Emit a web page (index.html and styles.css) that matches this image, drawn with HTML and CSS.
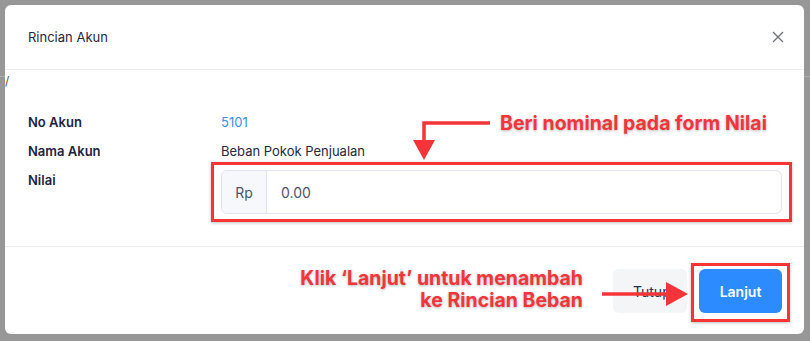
FILE: index.html
```html
<!DOCTYPE html>
<html lang="id">
<head>
<meta charset="utf-8">
<title>Rincian Akun</title>
<link rel="stylesheet" href="styles.css">
</head>
<body>
<div class="page-line"></div>
<div class="modal">
  <div class="modal-header">
    <span class="modal-title">Rincian Akun</span>
    <svg class="close" width="12" height="12" viewBox="0 0 12 12"><path d="M1 1L11 11M11 1L1 11" stroke="#6b6f78" stroke-width="1.3" fill="none"/></svg>
  </div>
  <div class="modal-body">
    <div class="label">No Akun</div>
    <div class="value link">5101</div>
    <div class="label">Nama Akun</div>
    <div class="value">Beban Pokok Penjualan</div>
    <div class="label nilai">Nilai</div>
    <div class="input-group">
      <span class="addon">Rp</span>
      <span class="input">0.00</span>
    </div>
  </div>
  <div class="modal-footer">
    <button class="btn btn-light">Tutup</button>
    <button class="btn btn-primary">Lanjut</button>
  </div>

  <span class="slash">/</span>
  <div class="note note-top">Beri nominal pada form Nilai</div>
  <svg class="arrow arrow-top" width="80" height="40" viewBox="0 0 80 40"><path d="M78 2H12V22" stroke="#f5343a" stroke-width="3.5" fill="none"/><path d="M1 19H23L12 39Z" fill="#f5343a"/></svg>
  <div class="hl hl-input"></div>
  <div class="note note-bottom">Klik ‘Lanjut’ untuk menambah<br>ke Rincian Beban</div>
  <svg class="arrow arrow-bottom" width="90" height="26" viewBox="0 0 90 26"><path d="M0 13H70" stroke="#f5343a" stroke-width="3.5"/><path d="M64 1L86 13L64 25Z" fill="#f5343a"/></svg>
  <div class="hl hl-btn"></div>
</div>
</body>
</html>
```

FILE: styles.css
```css
* { box-sizing: border-box; }
html, body { margin: 0; padding: 0; }
body {
  width: 810px;
  height: 341px;
  background: #979797;
  font-family: Inter, "Noto Sans", sans-serif;
  position: relative;
  overflow: hidden;
}
.page-line {
  position: absolute;
  left: 0; right: 0; top: 76px;
  height: 1px;
  background: #adadad;
}
.modal {
  position: relative;
  margin: 5px 0 0 5px;
  width: 799px;
  height: 329px;
  background: #fff;
  border-radius: 6px;
  display: flex;
  flex-direction: column;
}
.modal-header {
  height: 65px;
  border-bottom: 1px solid #ebedf0;
  display: flex;
  align-items: center;
  justify-content: space-between;
  padding: 0 20px 0 23px;
}
.modal-title {
  font-size: 13px;
  color: #1f2740;
}
.modal-body {
  display: grid;
  grid-template-columns: 193px 1fr;
  grid-auto-rows: 20px;
  row-gap: 9px;
  padding: 42px 22px 0 23px;
  height: 177px;
  border-bottom: 1px solid #ebedf0;
  align-items: center;
}
.label {
  font-size: 13px;
  font-weight: 600;
  color: #1c2442;
}
.label.nilai { align-self: start; line-height: 20px; }
.value {
  font-size: 13px;
  color: #222a3f;
}
.value.link { color: #3a8ef0; }
.input-group {
  height: 44px;
  display: flex;
  border: 1px solid #e1e4ee;
  border-radius: 6px;
  align-self: start;
}
.addon {
  width: 45px;
  background: #f7f8fb;
  border-right: 1px solid #e1e4ee;
  border-radius: 6px 0 0 6px;
  display: flex;
  align-items: center;
  justify-content: center;
  font-size: 14px;
  color: #4b536d;
}
.input {
  flex: 1;
  display: flex;
  align-items: center;
  padding-left: 14px;
  font-size: 14px;
  color: #4b536d;
}
.modal-footer {
  flex: 1;
  display: flex;
  align-items: center;
  justify-content: flex-end;
  gap: 12px;
  padding: 0 22px 0 0;
}
.btn {
  height: 44px;
  border: none;
  border-radius: 6px;
  font-family: inherit;
  font-size: 14px;
  padding: 0 20px;
}
.btn-light {
  background: #f4f5f7;
  color: #283250;
  width: 74px;
  margin-top: 1px;
}
.btn-primary {
  background: #2b8bff;
  color: #fff;
  font-weight: 600;
  width: 83px;
  margin-top: 1px;
}
.slash {
  position: absolute;
  left: 0; top: 68px;
  font-size: 12px;
  color: #555;
}
.note {
  position: absolute;
  color: #f5343a;
  font-weight: 700;
  font-size: 19.5px;
  text-shadow: 0 1px 3px rgba(0,0,0,0.3);
  white-space: nowrap;
}
.note-top { left: 495px; top: 106px; line-height: 24px; }
.note-bottom {
  right: 221px; top: 262px;
  text-align: right;
  line-height: 22px;
}
.arrow { position: absolute; }
.arrow-top { left: 407px; top: 116px; }
.arrow-bottom { left: 597px; top: 276px; }
.hl {
  position: absolute;
  border: 3px solid #f83434;
  box-shadow: 0 1px 3px rgba(0,0,0,0.25);
}
.hl-input { left: 206px; top: 157px; width: 581px; height: 60px; }
.hl-btn { left: 686px; top: 258px; width: 99px; height: 59px; }
```
